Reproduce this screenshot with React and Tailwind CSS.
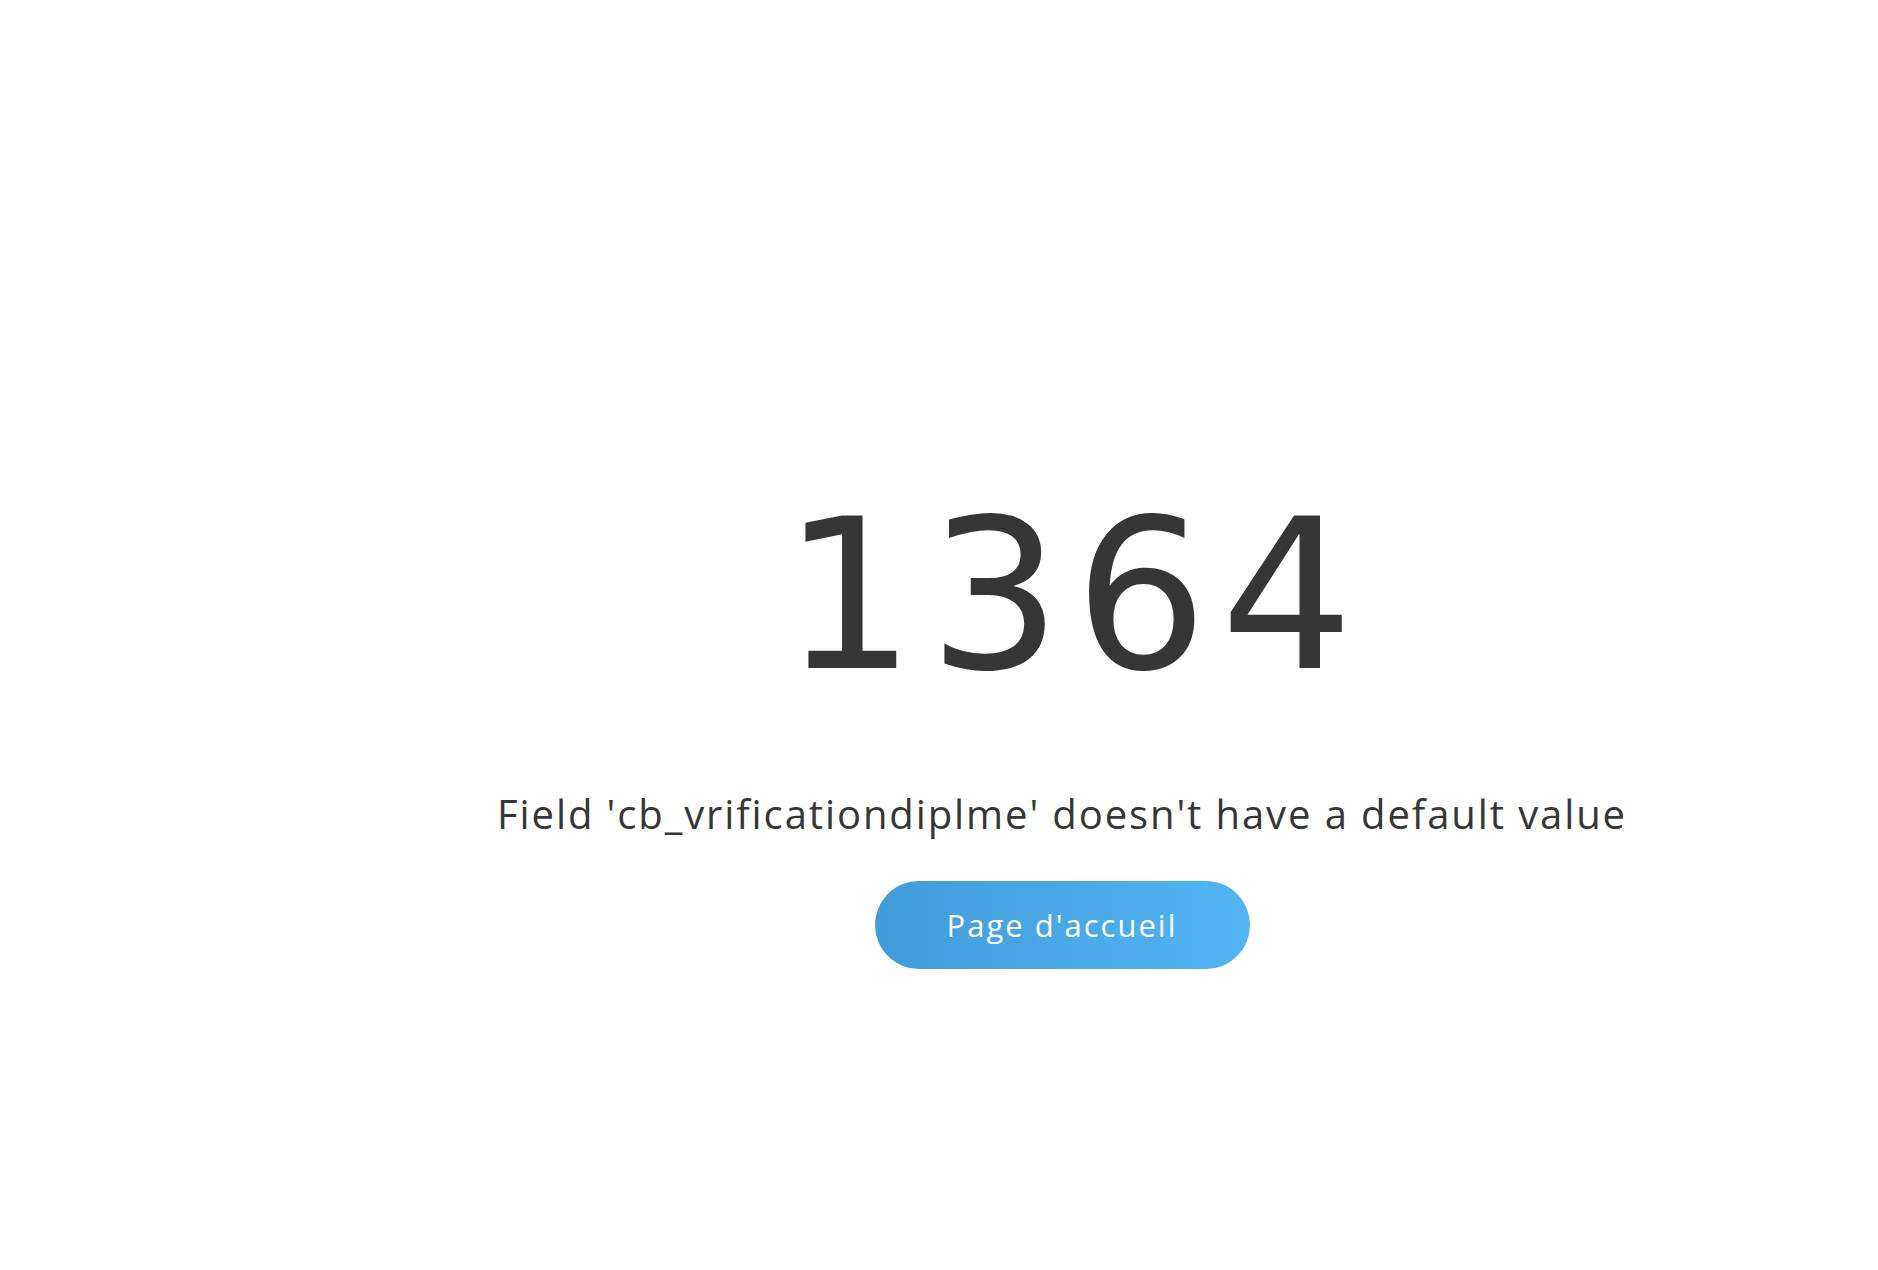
export default function App() {
  return (
    <div
      className="min-h-screen w-full bg-white flex flex-col items-center pl-[246px] pt-[491px]"
      style={{ fontFamily: '"Open Sans", "Noto Sans", sans-serif' }}
    >
      {/* Error code */}
      <h1
        className="text-[209px] leading-none font-normal text-[#363636] tracking-[13px] pl-[25px]"
        style={{ fontFamily: '"DejaVu Sans", sans-serif' }}
      >
        1364
      </h1>

      {/* Message */}
      <p className="mt-[94px] text-[40px] leading-none text-[#363636] tracking-[1.9px]">
        Field 'cb_vrificationdiplme' doesn't have a default value
      </p>

      <a
        href="#"
        className="mt-[47px] w-[375px] h-[88px] rounded-full flex items-center justify-center text-white text-[31px] bg-gradient-to-r from-[#419bd9] to-[#52b5f3] tracking-[2px]"
      >
        Page d'accueil
      </a>
    </div>
  );
}
